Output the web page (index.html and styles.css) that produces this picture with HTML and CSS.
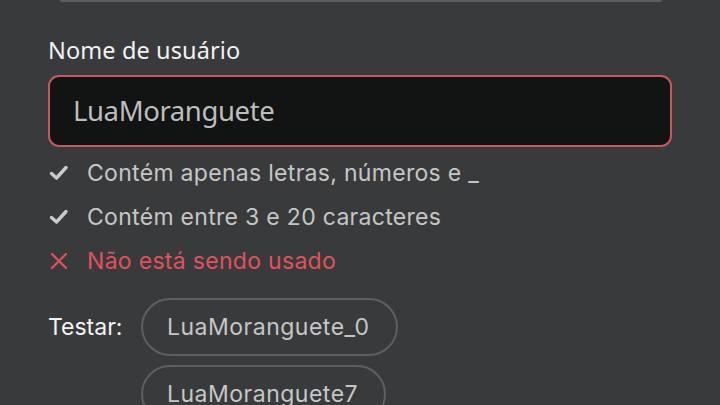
FILE: index.html
```html
<!DOCTYPE html>
<html lang="pt">
<head>
<meta charset="utf-8">
<link rel="stylesheet" href="styles.css">
</head>
<body>
<div class="prev-field"></div>
<main class="form">
  <label class="label" for="username">Nome de usuário</label>
  <div class="input">LuaMoranguete</div>
  <ul class="rules">
    <li class="rule ok">
      <svg class="ico" viewBox="0 0 20 20"><path d="M2.5 10.5 L7.5 15 L17 4.5" fill="none" stroke="currentColor" stroke-width="3.4" stroke-linecap="round" stroke-linejoin="round"/></svg>
      <span>Contém apenas letras, números e _</span>
    </li>
    <li class="rule ok">
      <svg class="ico" viewBox="0 0 20 20"><path d="M2.5 10.5 L7.5 15 L17 4.5" fill="none" stroke="currentColor" stroke-width="3.4" stroke-linecap="round" stroke-linejoin="round"/></svg>
      <span>Contém entre 3 e 20 caracteres</span>
    </li>
    <li class="rule bad">
      <svg class="ico" viewBox="0 0 20 20"><path d="M3 3 L17 17 M17 3 L3 17" fill="none" stroke="currentColor" stroke-width="2.2" stroke-linecap="round"/></svg>
      <span>Não está sendo usado</span>
    </li>
  </ul>
  <div class="suggest">
    <span class="try">Testar:</span>
    <div class="pills">
      <button class="pill">LuaMoranguete_0</button>
      <button class="pill">LuaMoranguete7</button>
    </div>
  </div>
</main>
</body>
</html>
```
FILE: styles.css
```css
html, body {
  margin: 0;
  padding: 0;
  background: #393a3c;
  height: 405px;
  overflow: hidden;
}
body {
  font-family: "Inter", sans-serif;
}
.prev-field {
  height: 2px;
  margin: 0 58px 0 60px;
  background: #5c5d5f;
  border-radius: 0 0 8px 8px;
}
.form {
  padding: 0 48px;
}
.label {
  display: block;
  margin-top: 33px;
  font-family: "Noto Sans", sans-serif;
  font-size: 23.5px;
  line-height: 30px;
  color: #f2f2f2;
  letter-spacing: 0.1px;
}
.input {
  box-sizing: border-box;
  margin-top: 10px;
  height: 72px;
  border: 2px solid #c85860;
  border-radius: 11px;
  background: #121313;
  padding: 0 0 2px 23px;
  display: flex;
  align-items: center;
  font-family: "Noto Sans", sans-serif;
  font-size: 27.5px;
  color: #bdbdbd;
  letter-spacing: -0.4px;
}
.rules {
  list-style: none;
  margin: 4px 0 0;
  padding: 0;
}
.rule {
  display: flex;
  align-items: center;
  height: 44px;
  font-size: 23px;
  color: #c6c6c6;
  letter-spacing: 0.3px;
}
.rule.bad { color: #e0525c; }
.ico {
  width: 20px;
  height: 20px;
  margin: 0 18px 0 1px;
}
.rule.ok .ico { color: #c9c9c9; }
.suggest {
  display: flex;
  align-items: flex-start;
  margin-top: 15px;
}
.try {
  font-size: 23px;
  color: #f4f4f4;
  line-height: 58px;
  width: 93px;
}
.pills {
  display: flex;
  flex-direction: column;
  align-items: flex-start;
  gap: 9px;
}
.pill {
  box-sizing: border-box;
  height: 58px;
  padding: 0 26px 0 24px;
  border: 2px solid #5e5f61;
  border-radius: 29px;
  background: transparent;
  font-family: "Inter", sans-serif;
  font-size: 23px;
  letter-spacing: 0.5px;
  color: #c6c6c6;
}
```
